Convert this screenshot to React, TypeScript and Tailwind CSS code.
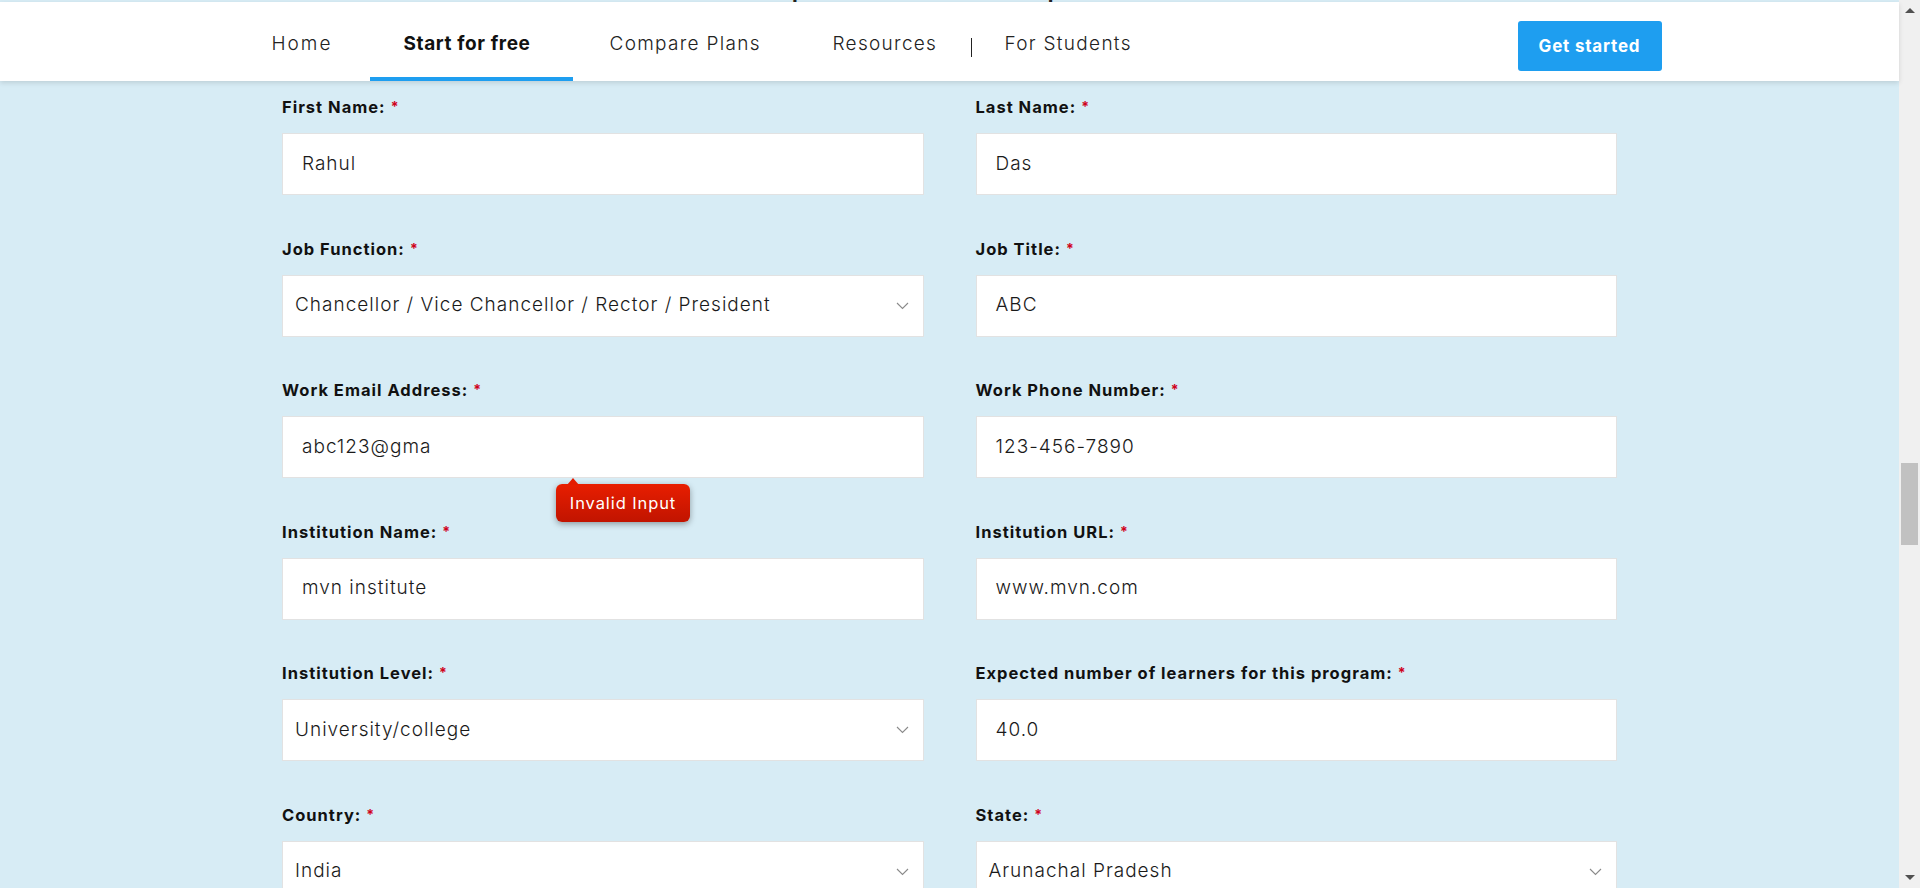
import React from "react";

const FONT = { fontFamily: 'Inter, "Noto Sans", "Open Sans", sans-serif' };

function Chevron() {
  return (
    <svg width="13" height="8" viewBox="0 0 13 8" className="shrink-0">
      <polyline points="1,1 6.5,6.5 12,1" fill="none" stroke="#8a8a8a" strokeWidth="1.1" />
    </svg>
  );
}

type Field = { label: string; value: string; select?: boolean; tooltip?: boolean };

function FieldBox({ f }: { f: Field }) {
  return (
    <div className="flex flex-col">
      <div className="h-[24px] flex items-center text-[16.5px] tracking-[1px] font-bold text-[#111] leading-[24px] mb-[14px]">
        {f.label}
        <span className="text-[#d0011b] ml-[5px] text-[14px]">*</span>
      </div>
      <div className="relative">
        <div
          className={
            "h-[62px] bg-white border border-[#e2e2e2] flex items-center justify-between text-[19px] tracking-[1px] font-light text-[#1a1a1a] " +
            (f.select ? "pl-[12px] pr-[14px]" : "pl-[19px] pr-[14px]")
          }
        >
          <span>{f.value}</span>
          {f.select && <Chevron />}
        </div>
        {f.tooltip && (
          <div className="absolute left-[274px] top-[68px] z-10">
            <div className="absolute left-[11px] -top-[6px] w-0 h-0 border-l-[6px] border-r-[6px] border-b-[7px] border-l-transparent border-r-transparent border-b-[#e41c00]" />
            <div className="h-[38px] w-[134px] rounded-[6px] bg-gradient-to-b from-[#e81e00] to-[#c11400] shadow-[0_2px_6px_rgba(0,0,0,0.35)] flex items-center justify-center text-white text-[16.5px] tracking-[0.9px]">
              Invalid Input
            </div>
          </div>
        )}
      </div>
    </div>
  );
}

export default function App() {
  const left: Field[] = [
    { label: "First Name:", value: "Rahul" },
    { label: "Job Function:", value: "Chancellor / Vice Chancellor / Rector / President", select: true },
    { label: "Work Email Address:", value: "abc123@gma", tooltip: true },
    { label: "Institution Name:", value: "mvn institute" },
    { label: "Institution Level:", value: "University/college", select: true },
    { label: "Country:", value: "India", select: true },
  ];
  const right: Field[] = [
    { label: "Last Name:", value: "Das" },
    { label: "Job Title:", value: "ABC" },
    { label: "Work Phone Number:", value: "123-456-7890" },
    { label: "Institution URL:", value: "www.mvn.com" },
    { label: "Expected number of learners for this program:", value: "40.0" },
    { label: "State:", value: "Arunachal Pradesh", select: true },
  ];
  const cells: Field[] = [];
  for (let i = 0; i < left.length; i++) {
    cells.push(left[i], right[i]);
  }

  return (
    <div className="h-[888px] w-full flex overflow-hidden bg-[#d7ecf5]" style={FONT}>
      <div className="flex-1 flex flex-col min-w-0">
        <div className="h-[2px] shrink-0 overflow-hidden flex justify-center">
          <span className="block -mt-[16px] leading-[18px] text-[21px] font-bold text-[#222] tracking-[1px]">
            Request a free trial of our platform
          </span>
        </div>
        <header className="h-[79px] bg-white shadow-[0_2px_5px_rgba(0,0,0,0.12)] relative z-20 shrink-0">
          <div className="w-[1424px] mx-auto h-full flex items-stretch justify-between">
            <nav className="flex items-stretch text-[19px] tracking-[1.3px] text-[#222]">
              <div className="w-[132px] pl-[34px] pt-[6px] flex items-center font-light tracking-[2px]">Home</div>
              <div className="w-[203px] pl-[34px] pt-[10px] flex items-center font-bold text-[#111] border-b-4 border-[#1e9ef0] tracking-[0.6px]">
                Start for free
              </div>
              <div className="w-[226px] pl-[37px] pt-[6px] flex items-center font-light">Compare Plans</div>
              <div className="w-[167px] pl-[34px] pt-[6px] flex items-center font-light">Resources</div>
              <div className="w-[39px] pl-[5px] pt-[6px] flex items-center">
                <span className="block w-[1.5px] h-[19px] bg-[#222] mt-[6px]" />
              </div>
              <div className="flex items-center pt-[6px] font-light">For Students</div>
            </nav>
            <div className="flex items-center pt-[9px]">
              <button className="h-[50px] w-[144px] rounded-[3px] bg-[#1e9ef0] text-white font-bold text-[17px] tracking-[0.8px] pt-[1px]">
                Get started
              </button>
            </div>
          </div>
        </header>
        <main className="flex justify-center pt-[14px]">
          <div className="w-[1335px] grid grid-cols-2 gap-x-[52px] gap-y-[41.5px]">
            {cells.map((f, i) => (
              <FieldBox key={i} f={f} />
            ))}
          </div>
        </main>
      </div>
      <div className="w-[21px] shrink-0 bg-[#f0f0f0] flex flex-col items-center justify-between relative">
        <div className="mt-[8px] w-0 h-0 border-l-[5px] border-r-[5px] border-b-[5px] border-l-transparent border-r-transparent border-b-[#505050]" />
        <div className="absolute left-[2px] top-[463px] w-[17px] h-[82px] bg-[#c1c1c1]" />
        <div className="mb-[8px] w-0 h-0 border-l-[5px] border-r-[5px] border-t-[5px] border-l-transparent border-r-transparent border-t-[#505050]" />
      </div>
    </div>
  );
}
